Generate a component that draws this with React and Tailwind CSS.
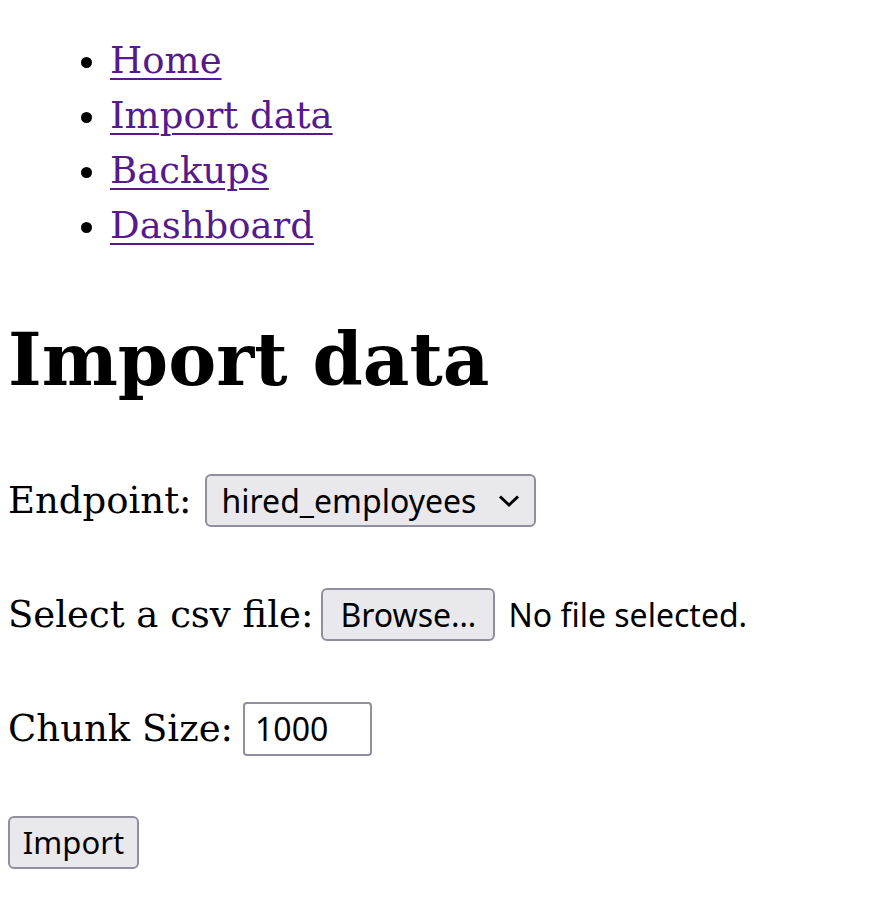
export default function App() {
  const links = ["Home", "Import data", "Backups", "Dashboard"];

  return (
    <div className="min-h-screen bg-white pl-[8px] pt-[33px] text-black font-['DejaVu_Serif',serif]">
      {/* Nav */}
      <ul className="list-disc pl-[102px] text-[37px] leading-[55px]">
        {links.map((l) => (
          <li key={l}>
            <a href="#" className="text-[#551a8b] underline decoration-[2px] underline-offset-[5px]">
              {l}
            </a>
          </li>
        ))}
      </ul>

      <h1 className="mt-[52px] text-[72px] font-bold leading-[109px]">Import data</h1>

      {/* Form */}
      <form className="mt-[60px] flex flex-col gap-[61px] text-[37px]" onSubmit={(e) => e.preventDefault()}>
        <div className="flex items-center h-[53px]">
          <label className="mr-[14px]">Endpoint:</label>
          <div className="flex items-center h-[53px] w-[331px] rounded-[6px] border-2 border-[#8f8f9d] bg-[#e9e9ed] pl-[14px] pr-[14px] font-['Noto_Sans',sans-serif] text-[32px]">
            <span className="flex-1 leading-none">hired_employees</span>
            <svg width="22" height="14" viewBox="0 0 22 14" fill="none" stroke="black" strokeWidth="3">
              <path d="M2 2.5 L11 11 L20 2.5" />
            </svg>
          </div>
        </div>

        <div className="flex items-center h-[53px]">
          <label className="mr-[8px]">Select a csv file:</label>
          <button type="button" className="h-[53px] w-[174px] rounded-[6px] border-2 border-[#8f8f9d] bg-[#e9e9ed] font-['Noto_Sans',sans-serif] text-[32px] leading-none">
            Browse…
          </button>
          <span className="ml-[13px] font-['Noto_Sans',sans-serif] text-[32px]">No file selected.</span>
        </div>

        <div className="flex items-center h-[53px]">
          <label className="mr-[10px]">Chunk Size:</label>
          <div className="flex items-center h-[54px] w-[129px] rounded-[4px] border-2 border-[#8f8f9d] bg-white pl-[10px] font-['Noto_Sans',sans-serif] text-[32px] leading-none">
            1000
          </div>
        </div>

        <div className="flex items-center h-[53px]">
          <button type="submit" className="h-[53px] w-[131px] rounded-[6px] border-2 border-[#8f8f9d] bg-[#e9e9ed] font-['Noto_Sans',sans-serif] text-[31px] leading-none">
            Import
          </button>
        </div>
      </form>
    </div>
  );
}
